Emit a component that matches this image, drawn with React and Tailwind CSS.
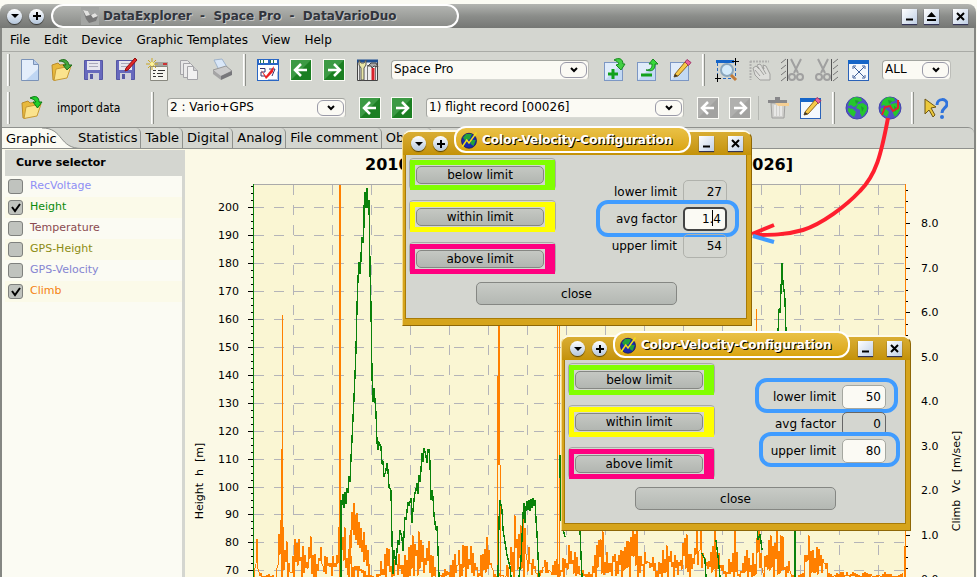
import React from "react";

/* ---------- chart data ---------- */

const CLIMB_ENVELOPE = [
  [254, 574], [257, 534], [259, 572], [276, 574], [279, 520], [281, 512], [284, 518], [287, 540], [290, 562],
  [293, 556], [295, 508], [297, 540], [300, 538], [304, 545], [308, 550], [311, 530], [314, 550], [320, 538],
  [325, 552], [330, 536], [334, 552], [339, 520], [342, 518], [345, 508], [348, 540], [368, 574],
  [378, 574], [380, 562], [386, 546], [391, 548], [395, 540], [400, 552], [404, 540], [409, 542], [414, 530], [419, 530],
  [424, 544], [428, 538], [433, 550], [437, 574], [446, 566], [449, 572], [455, 550], [463, 544], [472, 545],
  [478, 568], [484, 540], [487, 528], [491, 550], [496, 570], [505, 572], [512, 540], [516, 506], [519, 528],
  [522, 510], [527, 532], [533, 552], [538, 572], [545, 550], [550, 562], [564, 555], [568, 540], [574, 546],
  [580, 566], [590, 572], [596, 546], [602, 520], [606, 550], [612, 542], [618, 550], [626, 538], [630, 542],
  [634, 510], [638, 530], [642, 540], [650, 548], [656, 562], [663, 544], [669, 538], [676, 548], [682, 540],
  [687, 512], [692, 535], [699, 510], [705, 535], [710, 552], [715, 510], [720, 550], [726, 570], [732, 540],
  [736, 510], [739, 572], [744, 552], [751, 546], [755, 550], [758, 510], [763, 565], [768, 538], [772, 515],
  [777, 515], [783, 515], [786, 564], [789, 552], [792, 574], [802, 572], [806, 542], [809, 530], [812, 550],
  [815, 542], [820, 548], [825, 546], [829, 572], [840, 571], [880, 572], [902, 572],
];

const HEIGHT_POINTS = [
  "341,577 341,500 342,505 343,494 344,508 345,492 346,504 347,488 348,493 349,476 350,482 351,458 352,440 353,418 354,398 355,375 356,350 357,307 358,278 359,262 360,274 361,252 361,262 362,237 363,243 364,225 364,208 365,192 366,208 367,188 368,206 369,215 369,200 370,268 371,308 372,375 373,402 374,388 375,400 376,413 377,443 378,450 379,443 381,447 382,463 383,462 384,477 386,470 387,463 388,470 389,487 391,490 392,540 393,574 394,550 396,565 397,550 398,540 399,545 400,530 402,538 403,551 404,535 405,517 406,520 408,502 409,506 411,498 412,523 413,510 414,500 415,493 416,490 417,483 418,494 419,475 420,482 421,470 422,453 423,462 424,448 426,456 427,463 428,450 429,450 430,462 431,500 432,490 433,497 434,515 435,523 436,530 437,526 438,550 439,577",
  "498,577 499,520 500,500 502,510 503,530 505,542 507,555 510,567 511,577",
  "519,577 521,560 523,515 524,503 525,523 526,508 527,501 528,510 529,500 530,511 531,499 532,508 533,498 534,506 535,500 536,520 537,533 538,556 539,577",
  "560,455 560,467 561,520 565,537",
  "578,500 580,530 581,556 582,577",
  "702,553 705,560 706,577",
  "716,540 718,556 720,577",
  "756,500 758,540 760,534 762,550",
  "795,510 795,577",
  "778,333 779,309 780,313 781,290 782,263 783,284 784,290 785,300 786,333",
];

function climbTrace() {
  let seed = 41;
  const random = () => {
    seed = (seed * 16807) % 2147483647;
    return seed / 2147483647;
  };
  const points = [];
  let index = 0;
  for (let x = 254; x <= 903; x += 1) {
    while (index < CLIMB_ENVELOPE.length - 2 && CLIMB_ENVELOPE[index + 1][0] < x) index += 1;
    const [x0, y0] = CLIMB_ENVELOPE[index];
    const [x1, y1] = CLIMB_ENVELOPE[index + 1];
    const top = y0 + ((y1 - y0) * (x - x0)) / (x1 - x0);
    const reach = x % 2 ? 0.4 + random() * 0.6 : random() * 0.5;
    points.push(`${x},${Math.round(580 - (580 - top) * reach)}`);
  }
  return points.join(" ");
}

function Chart() {
  const left = [200, 190, 180, 170, 160, 150, 140, 130, 120, 110, 100, 90, 80, 70];
  const right = ["8.0", "7.0", "6.0", "5.0", "4.0", "3.0", "2.0", "1.0", "0.0"];
  const columns = Array.from({ length: 16 }, (_, i) => 293 + i * 39);
  return (
    <svg
      viewBox="185 149 789 428"
      preserveAspectRatio="xMinYMin slice"
      className="block h-full w-full font-['DejaVu_Sans',sans-serif] text-[11px]"
      role="img"
      aria-label="Height and climb over time"
    >
      <rect x="253" y="184" width="653" height="400" fill="#faf6d3" />
      <g stroke="#b4b4b8" shapeRendering="crispEdges" strokeDasharray="10 10">
        {left.map((v, i) => (
          <path key={v} d={`M254 ${Math.round(207 + i * 27.95)}.5H905`} />
        ))}
        {columns.map((x) => (
          <path key={x} d={`M${x}.5 185V577`} />
        ))}
      </g>
      <path d="M253 184.5H906" stroke="#aaa" />
      <g fill="none" shapeRendering="crispEdges">
        <g stroke="#ff8000">
          <polyline points={climbTrace()} />
          <polyline
            points="349,577 350,535 351,548 352,512 353,530 354,503 354,535 355,515 356,540 357,513 358,530 358,545 359,522 360,548 361,528 362,552 363,540 364,562 364,532 365,560 366,545 367,566 368,550 369,577"
            strokeWidth="2"
          />
          <path d="M282.5 315V577M281.500 449V577M557.500 325V577M559.500 325V577M756 309V333M904.500 546V577M497.500 376V577M500.500 465V577" />
          <path d="M340 185V577" strokeWidth="2" />
          <path d="M499 325V465" strokeWidth="2" />
        </g>
        <g stroke="#0a820a" strokeWidth="1.4">
          {HEIGHT_POINTS.map((p) => (
            <polyline key={p} points={p} />
          ))}
        </g>
      </g>
      <g shapeRendering="crispEdges">
        <path d="M253.500 184V577" stroke="#0a820a" strokeWidth="1" />
        <path d="M905.500 184V577" stroke="#ff8000" />
      </g>
      <g fill="#000">
        {left.map((v, i) => {
          const y = Math.round(207 + i * 27.95);
          return (
            <g key={v}>
              <text x="239" y={y + 4} textAnchor="end">{v}</text>
              <rect x="248" y={y} width="5" height="1" />
              {[-21, -14, -7].map((d) => (
                <rect key={d} x="251" y={y + d} width="2" height="1" />
              ))}
            </g>
          );
        })}
        {right.map((v, i) => {
          const y = Math.round(223 + i * 44.5);
          return (
            <g key={v}>
              <text x="921" y={y + 4}>{v}</text>
              <rect x="906" y={y} width="4" height="1" />
              {[-33, -22, -11].map((d) => (
                <rect key={d} x="906" y={y + d} width="2" height="1" />
              ))}
            </g>
          );
        })}
        <text transform="translate(203 481) rotate(-90)" textAnchor="middle" className="whitespace-pre">
          {"Height  h  [m]"}
        </text>
        <text transform="translate(960 481) rotate(-90)" textAnchor="middle" className="whitespace-pre">
          {"Climb  Vc  [m/sec]"}
        </text>
        <text x="365" y="170" className="text-[16px] font-bold">2010</text>
        <text x="793" y="170" textAnchor="end" className="text-[16px] font-bold">[00026]</text>
      </g>
    </svg>
  );
}

/* ---------- icons ---------- */

const PAGE = <path d="M3.500 1.500h12l5 5v16h-17z" fill="#e4eefb" stroke="#7b93b8" />;
const SQUARE_PAGE = (
  <>
    <rect x="1.500" y="4.500" width="18" height="18" fill="#e0ecfa" stroke="#7c97c4" />
    <path d="M2 22L19 5v17z" fill="#c3d9f3" />
  </>
);
const WINDOW = (
  <>
    <rect x="1.500" y="3.500" width="20" height="19" fill="#f4f8fd" stroke="#2a62b8" />
    <rect x="1" y="2" width="21" height="4" fill="#1565c8" />
  </>
);
const FOLDER = (
  <>
    <path d="M2 7l6-2 2 2 8-1v4L6 22H3z" fill="#e8b93c" stroke="#b98b2a" />
    <path d="M6 11l15-3-4 12-13 2.500z" fill="#fbe38d" stroke="#c79a35" />
  </>
);
const FLOPPY = (
  <>
    <path d="M2.500 2.500h18v19h-18z" fill="#6769bd" stroke="#5557a4" />
    <path d="M5 3h13v9H5z" fill="#e6e6ee" />
    <path d="M7 5.500h9M7 8.500h9" stroke="#a9a9bb" />
    <path d="M6 15h11v7H6z" fill="#d0d0da" />
    <path d="M8 16h3v5H8z" fill="#5557a4" />
  </>
);
const PENCIL = (
  <>
    <path d="M6 16L16 4l3 3L9 18l-4 1z" fill="#f7c948" stroke="#8f651b" />
    <path d="M16 4l2-2.500 4 3-2.500 3z" fill="#e9639b" stroke="#a13565" />
    <path d="M5 19l1-3 3 2z" fill="#333" />
  </>
);
const GLOBE = (
  <>
    <circle cx="12" cy="12" r="11" fill="#5153c6" stroke="#4446ae" />
    <path d="M6 3l4-2 6 1 1 3-4 1-1 3-3 2-3-2-3 1 1-4zM13 8l5-1 4 3 0 4-3 5-2 2-2-4 0-3-4-2zM3 12l5 1 3 3-2 5-3-2-3-4z" fill="#25c62e" />
    <path d="M10 4l4 1-3 3zM16 10l3 2-2 4z" fill="#1f9a33" />
  </>
);

const ARROW_LEFT = "M18 12H6m6-6l-6 6 6 6";
const ARROW_RIGHT = "M6 12h12m-6-6l6 6-6 6";

function arrowIcon(path, color, shade) {
  return (
    <>
      <rect x="1" y="1" width="22" height="22" fill="#fbfbf6" />
      <rect x="2" y="2" width="20" height="20" fill={color} />
      <path d="M2 22L22 2v20z" fill={shade} />
      <path d={path} stroke="#fff" strokeWidth="2.500" fill="none" />
    </>
  );
}

const ICONS = {
  file: (
    <>
      {PAGE}
      <path d="M15.500 1.500v5h5" fill="#b8cdec" stroke="#7b93b8" />
      <path d="M8 22L20 11v11z" fill="#bfd6f3" />
    </>
  ),
  open: (
    <>
      {FOLDER}
      <path d="M9 3c5-3 9-1 10 4h3l-5 5-4-5h3c-1-3-4-4-7-4z" fill="#43a83a" stroke="#1f6d1c" />
    </>
  ),
  importFile: (
    <>
      {FOLDER}
      <path d="M10 2c6-3 9-1 9 4h3l-4.500 6L13 6h3c-1-2-3-3-6-4z" fill="#20cf2b" stroke="#0c7a13" />
    </>
  ),
  save: FLOPPY,
  saveAs: (
    <>
      {FLOPPY}
      <path d="M21 0l2 2-9 10-3 1 1-3z" fill="#e32727" stroke="#8b1010" />
    </>
  ),
  settings: (
    <>
      <path d="M4.500 8.500h17v14h-17z" fill="#f4f4ee" stroke="#88887f" />
      <path d="M9 4h13v4H9z" fill="#a6a6a0" />
      <path d="M17 6h4" stroke="#c33" strokeWidth="2" />
      <path d="M7 12.500h3m2 0h7M7 15.500h2m2 0h6M7 18.500h3m2 0h5" stroke="#333" />
      <path d="M6 0v12M0 6h12M2 2l8 8M10 2l-8 8" stroke="#c9a726" />
      <circle cx="6" cy="6" r="2" fill="#fff59b" />
    </>
  ),
  copy: (
    <g stroke="#a4a4a8">
      <path d="M2.500 2.500h7l3 3v11h-10z" fill="#e6e6e6" />
      <path d="M5.500 5.500h7l3 3v11h-10z" fill="#ebebeb" />
      <path d="M9.500 8.500h6l4 4v9h-10z" fill="#f1f1f1" />
      <path d="M15.500 8.500v4h4" fill="#ccc" />
    </g>
  ),
  print: (
    <>
      <path d="M4 2l8-1 5 8-8 3z" fill="#d9e7f8" stroke="#9db2cb" />
      <path d="M3 12l13-4 6 5-12 6z" fill="#cbcbcb" stroke="#999" />
      <path d="M3 12v4l8 6v-4z" fill="#a5a5a5" />
      <path d="M11 18l11-5v4l-11 5z" fill="#77777b" />
    </>
  ),
  check: (
    <>
      <rect x="1.500" y="1.500" width="21" height="21" fill="#fff" stroke="#2a67c4" />
      <path d="M2 4.500h20" stroke="#2a67c4" strokeWidth="5" />
      <path d="M3 3.500h9M14 3.500h7" stroke="#fff" strokeWidth="3" />
      <path d="M4 3.500h1m2 0h1m6 0h1m2 0h1" stroke="#2a7a4a" strokeWidth="3" />
      <path d="M4 10.500h5v3.500H5v4h4m4-7h6l-3 7" stroke="#34346c" fill="none" />
      <path d="M5 12l5 6 8-10-1 6-7 7z" fill="#ee2222" />
      <path d="M12 21.500h9.500v-8" stroke="#a8bfdf" fill="none" />
    </>
  ),
  left: arrowIcon(ARROW_LEFT, "#3c9a44", "#1b7f22"),
  right: arrowIcon(ARROW_RIGHT, "#3c9a44", "#1b7f22"),
  leftOff: arrowIcon(ARROW_LEFT, "#b0b0ae", "#a2a2a0"),
  rightOff: arrowIcon(ARROW_RIGHT, "#b0b0ae", "#a2a2a0"),
  tools: (
    <>
      <path d="M2.500 3.500h20v19h-20z" fill="#eee" stroke="#444" />
      <path d="M2 3h21" stroke="#1f4f92" strokeWidth="3" />
      <path d="M4.500 8v14M12.500 7v15M20.500 8v14" stroke="#777" />
      <path d="M4 2v5l2 3v12h3V10l2-3V2L9 5H6z" fill="#e9e6a6" stroke="#555" />
      <path d="M13 8l3-3h5l2 4-4-1-2 2-1-2z" fill="#aaa" stroke="#444" />
      <path d="M18 10v12" stroke="#d8222b" strokeWidth="3" />
    </>
  ),
  add: (
    <>
      {SQUARE_PAGE}
      <path d="M10 11v10M5 16h10" stroke="#11a11b" strokeWidth="3" />
      <path d="M11 2c5-3 9-1 9 4h2l-4 6-5-5 3-1c-1-2-2-3-5-4z" fill="#42cf43" stroke="#188a1f" />
    </>
  ),
  remove: (
    <>
      {SQUARE_PAGE}
      <path d="M5 17h11" stroke="#11a11b" strokeWidth="3" />
      <path d="M10 12c5 0 6-2 6-6h-3l4-5 5 5h-3c0 6-3 8-9 6z" fill="#37d93c" stroke="#188a1f" />
    </>
  ),
  edit: (
    <>
      {SQUARE_PAGE}
      {PENCIL}
    </>
  ),
  zoom: (
    <>
      <path d="M1 3.500h18" stroke="#1565c8" strokeWidth="3" />
      <path d="M2.500 5v14M3 20.500h17M20.500 5v14" stroke="#2467c0" strokeDasharray="3 2" fill="none" />
      <circle cx="12" cy="12" r="6" fill="#d4ebfa" stroke="#8aa7bd" strokeWidth="2" />
      <path d="M16 17l5 5" stroke="#c07b3a" strokeWidth="3" />
      <path d="M20.500 0v7M17 3.500h7M2.500 16v8M0 20.500h6" stroke="#000" />
    </>
  ),
  hand: (
    <>
      <path d="M2 3.500h19M2.500 3v19" stroke="#b0b0ae" strokeWidth="2" strokeDasharray="2 1" />
      <path d="M5 10l3-2 3 3-2-4 3-1 4 5-1-4 3 1 4 8v6H12l-5-5z" fill="#dededb" stroke="#a0a09e" />
      <path d="M7 12l5 6M10 9l6 8M14 9l4 7" stroke="#a0a09e" />
    </>
  ),
  cutLeft: (
    <g stroke="#a0a0a0" fill="none">
      <path d="M0 5l5-4M0 11l5-4M0 17l5-4M0 23l5-4" stroke="#777" />
      <path d="M6.500 1v22" stroke="#555" />
      <path d="M10 1l7 14M20 1l-7 14" strokeWidth="2" />
      <circle cx="11" cy="19" r="3" strokeWidth="2" />
      <circle cx="19" cy="19" r="3" strokeWidth="2" />
    </g>
  ),
  cutRight: (
    <g stroke="#a0a0a0" fill="none">
      <path d="M19 5l5-4M19 11l5-4M19 17l5-4M19 23l5-4" stroke="#777" />
      <path d="M17.500 1v22" stroke="#555" />
      <path d="M4 1l7 14M14 1L7 15" strokeWidth="2" />
      <circle cx="5" cy="19" r="3" strokeWidth="2" />
      <circle cx="13" cy="19" r="3" strokeWidth="2" />
    </g>
  ),
  fit: (
    <>
      {WINDOW}
      <path d="M7 9l10 10M17 9L7 19" stroke="#3f5f9a" />
      <path d="M6 11V8h3M15 8h3v3M18 17v3h-3M9 20H6v-3" stroke="#3f5f9a" fill="none" />
    </>
  ),
  trash: (
    <>
      <path d="M5 7h14l-1 15H6z" fill="#d0d0cd" stroke="#a0a09e" />
      <path d="M9 9v11M12 9v11M15 9v11" stroke="#fff" />
      <path d="M2 5.500h19M9 2.500h5" stroke="#88888a" strokeWidth="3" />
      <path d="M9 7h14v3H12z" fill="#f5cf93" />
    </>
  ),
  note: (
    <>
      {WINDOW}
      {PENCIL}
    </>
  ),
  globe: GLOBE,
  globeVelocity: (
    <>
      {GLOBE}
      <path d="M4 19l3-8 5-1 3 5 5-3V4" stroke="#e82228" strokeWidth="2" fill="none" />
    </>
  ),
  help: (
    <>
      <path d="M1 3l11 8-5 1 4 7-2 2-4-7-4 4z" fill="#ecc93c" stroke="#6e5712" />
      <path d="M13 9c0-7 10-7 10-1 0 4-5 4-5 9" stroke="#2f73dc" strokeWidth="3" fill="none" />
      <circle cx="18" cy="21" r="2" fill="#2f73dc" />
    </>
  ),
};

function Tool({ name, label, className = "w-8" }) {
  return (
    <button type="button" aria-label={label} className={`flex h-8 shrink-0 items-center justify-center ${className}`}>
      <svg viewBox="0 0 24 24" className="h-6 w-6">{ICONS[name]}</svg>
    </button>
  );
}

function Separator({ className = "" }) {
  return <div className={`h-8 w-[3px] shrink-0 border-r border-l border-r-[#8e908b] border-l-white bg-[#e8e9e4] ${className}`} />;
}

function Select({ label, value, className }) {
  return (
    <div className={`relative h-5 shrink-0 ${className}`}>
      <select
        aria-label={label}
        defaultValue={value}
        className="h-full w-full appearance-none rounded-[4px] border border-[#a3a5a0] border-r-[#bcbdb8] border-b-[#d8d9d4] bg-[#fbfaf4] pb-[2px] pl-[2px] text-[12px] leading-4 text-black"
      >
        <option>{value}</option>
      </select>
      <span className="pointer-events-none absolute top-[2px] right-[2px] flex h-4 w-[27px] items-center justify-center rounded-[6px] border border-[#9a9aa8]">
        <svg viewBox="0 0 8 6" className="h-[6px] w-2">
          <path d="M1 1l3 3 3-3" fill="none" stroke="#000" strokeWidth="2" />
        </svg>
      </span>
    </div>
  );
}

/* ---------- window frame controls ---------- */

function RoundButton({ kind }) {
  return (
    <button
      type="button"
      aria-label={kind === "menu" ? "Window menu" : "Keep on all desktops"}
      className="flex h-[15px] w-[15px] shrink-0 items-center justify-center rounded-full bg-linear-to-b from-white to-[#b4c6dc] shadow-[0_1px_1px_#0009]"
    >
      <svg viewBox="0 0 10 10" className="h-[10px] w-[10px]">
        {kind === "menu" ? <path d="M1 3h8L5 7z" /> : <path d="M5 1v8M1 5h8" stroke="#000" strokeWidth="2" />}
      </svg>
    </button>
  );
}

function SquareButton({ kind, className = "" }) {
  const label = { min: "Minimize", max: "Restore", close: "Close" }[kind];
  return (
    <button
      type="button"
      aria-label={label}
      className={`flex h-[15px] w-[15px] shrink-0 items-center justify-center bg-linear-to-br from-white to-[#c0d0e6] shadow-[0_1px_1px_#335] ${className}`}
    >
      <svg viewBox="0 0 11 11" className="h-[11px] w-[11px]">
        {kind === "min" && <path d="M2 8.500h7" stroke="#000" strokeWidth="2" />}
        {kind === "max" && <path d="M1 6h9L5.500 1zM1 8h9v2H1z" />}
        {kind === "close" && <path d="M2 2l7 7M9 2L2 9" stroke="#000" strokeWidth="2" />}
      </svg>
    </button>
  );
}

/* ---------- dialog ---------- */

function LimitColor({ label, className }) {
  return (
    <div className="h-8 w-[147px] rounded-[4px] border border-[#a9aba6] pt-px">
      <div className={`h-[30px] py-[5px] pr-[10px] pl-[5px] ${className}`}>
        <div className="h-5 bg-[#d4d6d0] p-px">
          <button
            type="button"
            className="flex h-[18px] w-full items-center justify-center rounded-[5px] border border-[#858783] bg-linear-to-b from-[#c5c8c3] to-[#b2b6b1] text-[12px] leading-4"
          >
            {label}
          </button>
        </div>
      </div>
    </div>
  );
}

const FIELD_STYLES = {
  plain: "border-[#b0b2ac] bg-transparent",
  white: "border-[#a5a7a0] bg-[#fbfaf4]",
  focus: "border-[#444] bg-[#fbfaf4] border-2",
  dark: "border-[#666] bg-transparent",
};

function Field({ id, label, value, kind, ring, caret }) {
  return (
    <div className="relative flex h-[27px] items-center justify-end gap-[6px]">
      <label htmlFor={id} className="text-[12px] leading-4 whitespace-nowrap">{label}</label>
      <input
        id={id}
        defaultValue={value}
        className={`h-6 w-11 shrink-0 rounded-[5px] border pr-1 text-right text-[12px] leading-4 ${FIELD_STYLES[kind]}`}
      />
      {caret && <span className="absolute top-[5px] right-[14px] h-4 w-px bg-black" />}
      {ring && <span className={`pointer-events-none absolute rounded-[12px] border-4 border-[#409cff] ${ring}`} />}
    </div>
  );
}

function Dialog({ id, place, fields }) {
  return (
    <section
      aria-label="Color-Velocity-Configuration"
      className={`absolute w-[350px] rounded-t-[9px] border border-[#8e6706] border-t-2 border-t-[#fffbe8] border-l-[#f3d98b] bg-[#d5a41c] ${place}`}
    >
      <header className="flex h-[23px] items-center rounded-t-[8px] bg-linear-to-b from-[#d9ad31] to-[#c49206] pl-2">
        <div className="flex gap-[7px]">
          <RoundButton kind="menu" />
          <RoundButton kind="plus" />
        </div>
        <div className="mr-2 ml-[6px] mt-[-6px] flex h-[27px] min-w-0 flex-1 items-center gap-1 self-start rounded-[12px] border-2 border-white bg-linear-to-b from-[#e9c145] to-[#dba50c] pl-1">
          <svg viewBox="0 0 24 24" className="h-[18px] w-[18px] shrink-0">
            <circle cx="12" cy="13" r="10" fill="#1a2aac" stroke="#101756" />
            <path d="M8 4l8 0-3 7-6 2-3-4zM15 12l6 0-3 8-4-3z" fill="#22a23a" />
            <path d="M3 21l6-9 3 4 10-14" stroke="#f2df1c" strokeWidth="2" fill="none" />
          </svg>
          <h2 className="text-[12px] font-bold whitespace-nowrap text-white [text-shadow:1px_1px_0_#000]">
            Color-Velocity-Configuration
          </h2>
        </div>
        <SquareButton kind="min" />
        <SquareButton kind="close" className="mr-2 ml-[14px]" />
      </header>
      <div className="mr-1 mb-[6px] ml-[2px] border border-t-0 border-[#a87b06] bg-[#d4d6d0] pt-[3px] pr-[2px] pb-[13px] pl-[3px]">
        <div className="flex justify-between">
          <div className="flex flex-col gap-[10px]">
            <LimitColor label="below limit" className="bg-[#80ff00]" />
            <LimitColor label="within limit" className="bg-[#ffff00]" />
            <LimitColor label="above limit" className="bg-[#ff0080]" />
          </div>
          <div className="pt-5 pr-[17px]">
            {fields.map((f) => (
              <Field key={f.label} id={`${id}-${f.label.replace(" ", "-")}`} {...f} />
            ))}
          </div>
        </div>
        <button
          type="button"
          className="mx-auto mt-2 flex h-[23px] w-[201px] items-center justify-center rounded-[5px] border border-[#858783] bg-linear-to-b from-[#c8cbc6] to-[#b4b8b3] text-[12px] leading-4"
        >
          close
        </button>
      </div>
    </section>
  );
}

/* ---------- main window ---------- */

const CURVES = [
  ["RecVoltage", "text-[#8f8ff5]", false],
  ["Height", "text-[#0a8a0a]", true],
  ["Temperature", "text-[#8a4a50]", false],
  ["GPS-Height", "text-[#8c8c14]", false],
  ["GPS-Velocity", "text-[#8585d2]", false],
  ["Climb", "text-[#f58211]", true],
];

const TABS = ["Statistics", "Table", "Digital", "Analog", "File comment", "Object"];

export default function App() {
  return (
    <div className="relative flex h-screen flex-col overflow-hidden bg-[#fbfbf3] pt-1 pr-px font-['DejaVu_Sans',sans-serif] text-[12px] text-black">
      <header className="flex h-6 shrink-0 items-center gap-[7px] rounded-t-[8px] bg-linear-to-b from-[#b3b5b1] via-[#8b8d8a] to-[#757774] pr-2 pl-[7px]">
        <RoundButton kind="menu" />
        <RoundButton kind="plus" />
        <div className="flex h-6 w-[408px] items-center rounded-[12px] border-2 border-white bg-linear-to-b from-[#b2b4b0] to-[#8b8d8a] pl-7">
          <svg viewBox="0 0 18 18" className="h-[18px] w-[18px]">
            <rect width="18" height="18" fill="#a4a6a4" />
            <path d="M2 3l5 1 2 4 5-2 3 3-2 5-7 2-3-4z" fill="#777" />
            <path d="M2 3l5 1 2 4-4 1zM10 8l4-2 3 3-5 2z" fill="#e2e2e0" />
          </svg>
          <h1 className="pl-1 text-[12px] font-bold whitespace-pre text-[#30343c] [text-shadow:1px_1px_0_#c8c8c8]">
            {"DataExplorer  -  Space Pro  -  DataVarioDuo"}
          </h1>
        </div>
        <SquareButton kind="min" className="ml-auto" />
        <SquareButton kind="max" />
        <SquareButton kind="close" className="ml-[7px]" />
      </header>

      <div className="flex min-h-0 flex-1 flex-col border-r-2 border-l-2 border-r-[#858783] border-l-[#858783] bg-[#d4d6d0]">
        <nav className="flex h-6 shrink-0 items-center gap-[14px] border-b border-[#a9aba6] pl-2">
          {["File", "Edit", "Device", "Graphic Templates", "View", "Help"].map((item) => (
            <button key={item} type="button" className="text-[12px] leading-4">{item}</button>
          ))}
        </nav>

        <div className="flex h-9 shrink-0 items-center pl-[5px]">
          <Separator className="mr-1" />
          <Tool name="file" label="New" />
          <Tool name="open" label="Open" />
          <Tool name="save" label="Save" />
          <Tool name="saveAs" label="Save as" />
          <Tool name="settings" label="Settings" />
          <Tool name="copy" label="Copy" />
          <Tool name="print" label="Print" />
          <Separator className="mx-[5px]" />
          <Tool name="check" label="Select device" className="w-[33px]" />
          <Tool name="left" label="Previous device" className="w-[33px]" />
          <Tool name="right" label="Next device" className="w-[33px]" />
          <Tool name="tools" label="Device tools" className="w-[33px]" />
          <Select label="Device" value="Space Pro" className="mr-[9px] ml-2 w-[198px]" />
          <Tool name="add" label="Add object" className="w-[33px]" />
          <Tool name="remove" label="Remove object" className="w-[33px]" />
          <Tool name="edit" label="Edit object" className="w-[33px]" />
          <Separator className="mx-[5px]" />
          <Tool name="zoom" label="Zoom" className="w-[33px]" />
          <Tool name="hand" label="Pan" className="w-[33px]" />
          <Tool name="cutLeft" label="Cut left" className="w-[33px]" />
          <Tool name="cutRight" label="Cut right" className="w-[33px]" />
          <Tool name="fit" label="Fit" className="w-[33px]" />
          <Select label="Scope" value="ALL" className="ml-[7px] w-[69px]" />
        </div>

        <div className="flex h-[39px] shrink-0 items-center pl-[5px]">
          <Separator className="mr-[6px]" />
          <Tool name="importFile" label="Import" />
          <button type="button" className="ml-[9px] w-[94px] text-left font-['DejaVu_Sans_Condensed','DejaVu_Sans',sans-serif] text-[12px] leading-4">
            import data
          </button>
          <Separator />
          <Select label="Channel" value="2 : Vario+GPS" className="mr-2 ml-[13px] w-[179px]" />
          <Tool name="left" label="Previous channel" />
          <Tool name="right" label="Next channel" />
          <Select label="Record" value="1) flight record [00026]" className="mr-2 ml-2 w-[258px]" />
          <Tool name="leftOff" label="Previous record" />
          <Tool name="rightOff" label="Next record" />
          <div className="mx-[2px] h-6 w-px bg-[#b5b7b2]" />
          <Tool name="trash" label="Delete record" className="w-[33px]" />
          <Tool name="note" label="Edit record" className="w-[33px]" />
          <Separator className="mx-[5px]" />
          <Tool name="globe" label="Google Earth" className="w-[33px]" />
          <Tool name="globeVelocity" label="Velocity colors" className="w-[33px]" />
          <Separator className="mx-[5px]" />
          <Tool name="help" label="Help" className="w-[33px]" />
        </div>

        <div role="tablist" className="flex h-[22px] shrink-0 overflow-hidden rounded-tr-[6px] border-t border-b border-[#8f918d]">
          <button type="button" role="tab" aria-selected="true" className="relative -mb-px w-[72px] shrink-0 text-left">
            <svg viewBox="0 0 80 22" className="absolute top-0 left-0 h-[22px] w-20">
              <path d="M0 0H40C62 0 56 21 80 21V22H0z" fill="#fbfbf3" />
              <path d="M40 0C62 0 56 20.500 80 20.500" fill="none" stroke="#8f918d" />
            </svg>
            <span className="relative pl-1 text-[13px] leading-5">Graphic</span>
          </button>
          {TABS.map((tab) => (
            <button
              key={tab}
              type="button"
              role="tab"
              aria-selected="false"
              className="shrink-0 rounded-tr-[5px] border-r border-[#8f918d] pr-[3px] pl-1 text-[13px] leading-5"
            >
              {tab}
            </button>
          ))}
        </div>

        <main className="flex min-h-0 flex-1 bg-[#fbf9e6]">
          <aside className="mt-px w-[183px] shrink-0 border-r-[3px] border-[#d4d6d0] bg-[#fbfbf3] pl-[3px]">
            <h2 className="flex h-[26px] items-center bg-[#d4d6d0] pl-[11px] text-[11px] font-bold">Curve selector</h2>
            {CURVES.map(([name, color, checked]) => (
              <label key={name} className={`flex h-[21px] items-center gap-[7px] pl-[3px] text-[11px] even:bg-[#fbfbf3] odd:bg-[#fbfae9] ${color}`}>
                <input
                  type="checkbox"
                  defaultChecked={checked}
                  className="peer h-[15px] w-[15px] appearance-none rounded-[3px] border border-[#7f817e] bg-[#c0c3be]"
                />
                <svg viewBox="0 0 15 15" className="pointer-events-none invisible -ml-[22px] h-[15px] w-[15px] peer-checked:visible">
                  <path d="M4 7l3 4 5-7" fill="none" stroke="#000" strokeWidth="2" />
                </svg>
                {name}
              </label>
            ))}
          </aside>
          <div className="min-w-0 flex-1">
            <Chart />
          </div>
        </main>
      </div>

      <Dialog
        id="first"
        place="left-[402px] top-[130px]"
        fields={[
          { label: "lower limit", value: "27", kind: "plain" },
          { label: "avg factor", value: "1.4", kind: "focus", caret: true, ring: "-top-[5px] -right-3 h-[37px] w-[143px]" },
          { label: "upper limit", value: "54", kind: "plain" },
        ]}
      />
      <Dialog
        id="second"
        place="left-[561px] top-[335px]"
        fields={[
          { label: "lower limit", value: "50", kind: "white", ring: "-top-[5px] -right-3 h-[35px] w-[143px]" },
          { label: "avg factor", value: "0", kind: "dark" },
          { label: "upper limit", value: "80", kind: "white", ring: "-top-[5px] -right-[14px] h-[35px] w-[141px]" },
        ]}
      />

      <svg viewBox="0 0 977 577" className="pointer-events-none absolute top-0 left-0 h-[577px] w-[977px]" fill="none" strokeWidth="4">
        <path d="M888 118C881 155 876 175 860 191C846 206 822 224 803 230C786 235 770 235 753 235" stroke="#ff1f2e" />
        <path d="M752 234l22-9" stroke="#ff1f2e" />
        <path d="M753 236l21 6" stroke="#409cff" />
      </svg>
    </div>
  );
}
